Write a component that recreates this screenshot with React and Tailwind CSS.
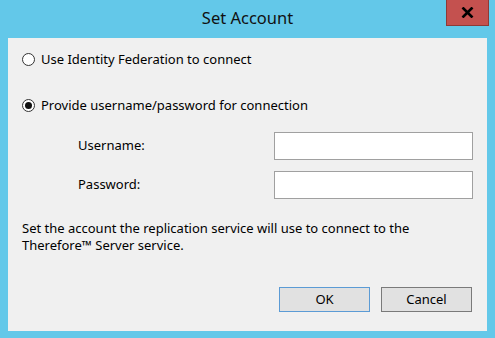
export default function App() {
  const font = { fontFamily: '"Segoe UI", "Noto Sans", "Open Sans", sans-serif' };
  return (
    <div className="w-[495px] h-[338px] bg-[#63c8e9] flex flex-col text-[#000]" style={font}>
      <div className="relative h-[38px] flex items-start justify-center">
        <span className="mt-[8px] text-[16.5px] text-[#111] leading-[20px]">Set Account</span>
        <button className="absolute right-[6px] top-0 w-[43px] h-[26px] bg-[#c4514f] border border-[#8e3a37] border-t-0 flex items-center justify-center">
          <svg width="13" height="11" viewBox="0 0 13 11">
            <path d="M1.5 0.5 L11.5 10.5 M11.5 0.5 L1.5 10.5" stroke="#000" strokeWidth="2.6" />
          </svg>
        </button>
      </div>
      <div className="mx-[8px] h-[293px] bg-[#f0f0f0] flex flex-col pt-[14px] pl-[14px] pr-[14px] text-[13px]">
        <label className="flex items-center gap-[6px] h-[15px]">
          <span className="w-[13px] h-[13px] rounded-full border border-[#333] bg-white"></span>
          <span>Use Identity Federation to connect</span>
        </label>
        <label className="flex items-center gap-[6px] h-[15px] mt-[31px]">
          <span className="w-[13px] h-[13px] rounded-full border border-[#333] bg-white flex items-center justify-center">
            <span className="w-[7px] h-[7px] rounded-full bg-[#111]"></span>
          </span>
          <span>Provide username/password for connection</span>
        </label>
        <div className="flex items-center mt-[19px]">
          <span className="w-[252px] pl-[56px]">Username:</span>
          <input className="w-[200px] h-[28px] bg-white border border-[#a0a0a0] outline-none" />
        </div>
        <div className="flex items-center mt-[11px]">
          <span className="w-[252px] pl-[56px]">Password:</span>
          <input type="password" className="w-[200px] h-[28px] bg-white border border-[#a0a0a0] outline-none" />
        </div>
        <p className="mt-[21px] leading-[17px] w-[420px]">
          Set the account the replication service will use to connect to the Therefore™ Server service.
        </p>
        <div className="flex justify-end gap-[11px] mt-[33px] pr-[1px]">
          <button className="w-[91px] h-[25px] bg-[#e1e1e1] border border-[#5b9bd5]">OK</button>
          <button className="w-[91px] h-[25px] bg-[#e1e1e1] border border-[#7a7a7a]">Cancel</button>
        </div>
      </div>
    </div>
  );
}
